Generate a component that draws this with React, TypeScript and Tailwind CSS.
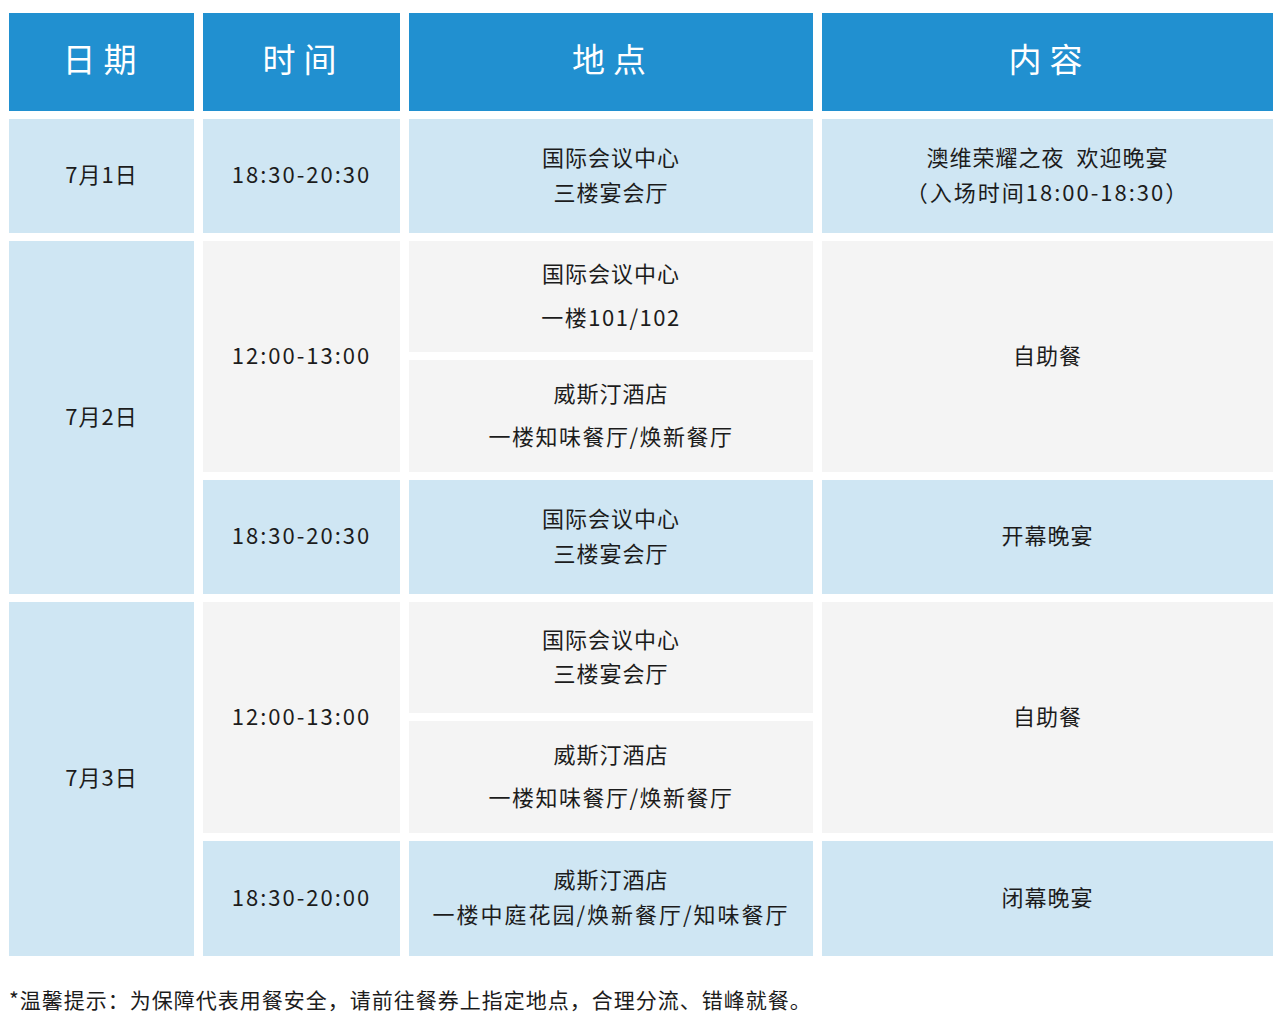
import React from "react";

const BLUE = "bg-[#cfe6f3]";
const GRAY = "bg-[#f4f4f4]";

function Cell({
  className = "",
  children,
}: {
  className?: string;
  children: React.ReactNode;
}) {
  return (
    <div
      className={`flex flex-col items-center justify-center text-center text-[22px] text-[#1c1c1c] tracking-[1px] pb-[5px] ${className}`}
    >
      {children}
    </div>
  );
}

function Head({ children }: { children: React.ReactNode }) {
  return (
    <div className="flex items-center justify-center bg-[#2190d0] text-white text-[33px] tracking-[8px] pl-[4px] pb-[7px]">
      {children}
    </div>
  );
}

export default function App() {
  return (
    <div
      className="w-[1280px] h-[1036px] bg-white overflow-hidden"
      style={{ fontFamily: '"Noto Sans CJK SC", "Noto Sans", sans-serif' }}
    >
      <div className="ml-[9px] mt-[13px] grid grid-cols-[185px_197px_404px_451px] grid-rows-[98px_114px_111px_112px_114px_111px_112px_115px] gap-x-[9px] gap-y-[8px]">
        {/* header */}
        <Head>日期</Head>
        <Head>时间</Head>
        <Head>地点</Head>
        <Head>内容</Head>

        {/* row 1 */}
        <Cell className={BLUE}>7月1日</Cell>
        <Cell className={`${BLUE} tracking-[2px]`}>18:30-20:30</Cell>
        <Cell className={`${BLUE} leading-[35px]`}>
          <span>国际会议中心</span>
          <span>三楼宴会厅</span>
        </Cell>
        <Cell className={`${BLUE} leading-[35px]`}>
          <span>澳维荣耀之夜&nbsp; 欢迎晚宴</span>
          <span className="tracking-[2px]">（入场时间18:00-18:30）</span>
        </Cell>

        {/* 7月2日 */}
        <Cell className={`${BLUE} row-span-3`}>7月2日</Cell>
        <Cell className={`${GRAY} row-span-2 tracking-[2px]`}>12:00-13:00</Cell>
        <Cell className={`${GRAY} leading-[44px]`}>
          <span>国际会议中心</span>
          <span className="tracking-[1.5px]">一楼101/102</span>
        </Cell>
        <Cell className={`${GRAY} row-span-2`}>自助餐</Cell>
        <Cell className={`${GRAY} leading-[43px]`}>
          <span>威斯汀酒店</span>
          <span className="tracking-[1.5px]">一楼知味餐厅/焕新餐厅</span>
        </Cell>
        <Cell className={`${BLUE} tracking-[2px]`}>18:30-20:30</Cell>
        <Cell className={`${BLUE} leading-[35px]`}>
          <span>国际会议中心</span>
          <span>三楼宴会厅</span>
        </Cell>
        <Cell className={BLUE}>开幕晚宴</Cell>

        {/* 7月3日 */}
        <Cell className={`${BLUE} row-span-3`}>7月3日</Cell>
        <Cell className={`${GRAY} row-span-2 tracking-[2px]`}>12:00-13:00</Cell>
        <Cell className={`${GRAY} leading-[34px]`}>
          <span>国际会议中心</span>
          <span>三楼宴会厅</span>
        </Cell>
        <Cell className={`${GRAY} row-span-2`}>自助餐</Cell>
        <Cell className={`${GRAY} leading-[43px]`}>
          <span>威斯汀酒店</span>
          <span className="tracking-[1.5px]">一楼知味餐厅/焕新餐厅</span>
        </Cell>
        <Cell className={`${BLUE} tracking-[2px]`}>18:30-20:00</Cell>
        <Cell className={`${BLUE} leading-[35px]`}>
          <span>威斯汀酒店</span>
          <span className="tracking-[2px]">一楼中庭花园/焕新餐厅/知味餐厅</span>
        </Cell>
        <Cell className={BLUE}>闭幕晚宴</Cell>
      </div>

      <p className="ml-[9px] mt-[29px] text-[21px] leading-[28px] tracking-[1px] text-[#1c1c1c]">
        *温馨提示：为保障代表用餐安全，请前往餐券上指定地点，合理分流、错峰就餐。
      </p>
    </div>
  );
}
